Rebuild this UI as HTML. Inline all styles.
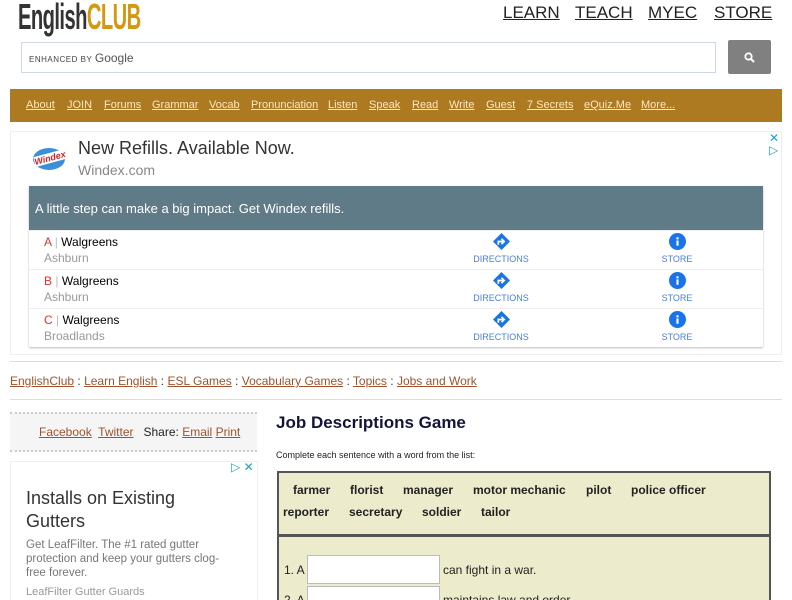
<!DOCTYPE html>
<html style="overflow:hidden"><head><meta charset="utf-8"><style>
html,body{margin:0;width:792px;height:600px;overflow:hidden}
body{background:#fff;font-family:"Liberation Sans",Arial,sans-serif;position:relative}
.a{position:absolute}
a{color:inherit;text-decoration:underline}
.top a{color:#222;font-size:17px;position:absolute;top:3px}
.nav{left:10px;top:89px;width:772px;height:33px;background:#ad7a22}
.nav a{color:#fbe8c0;font-size:11px;position:absolute;top:10px}
.bc a{color:#a0522d}
.rf{font-family:"Liberation Sans",sans-serif}
.row{position:absolute;left:0;width:734px;height:38px;border-top:1px solid #eee;font-size:12px}
.dir{position:absolute;left:440px;top:1px;width:64px;text-align:center;color:#4a80d8;font-size:9px;line-height:11px}
.st{position:absolute;left:628px;top:1px;width:40px;text-align:center;color:#4a80d8;font-size:9px;line-height:11px}
.ico{display:inline-block;width:17px;height:17px;margin-top:1px;margin-bottom:1px}
.w{font-weight:bold;font-size:12px;position:absolute;color:#222}
</style></head><body>
<div class="a" style="left:18px;top:-4px;font-size:36px;font-weight:bold;letter-spacing:-1px;transform:scaleX(0.56);transform-origin:left"><span style="color:#333">English</span><span style="color:#d4990e">CLUB</span></div>
<div class="top"><a style="left:503px">LEARN</a><a style="left:575px">TEACH</a><a style="left:648px">MYEC</a><a style="left:714px">STORE</a></div>
<div class="a" style="left:21px;top:42px;width:693px;height:29px;border:1px solid #cfd8e0;background:#fff"><span class="a" style="left:7px;top:8px;font-size:8px;color:#444;letter-spacing:.5px">ENHANCED BY <span style="font-size:12px;letter-spacing:0;color:#555">Google</span></span></div>
<div class="a" style="left:728px;top:40px;width:43px;height:34px;background:#808080;border-radius:2px"><svg class="a" style="left:16px;top:12px" width="11" height="11"><circle cx="4.5" cy="4.5" r="3.2" stroke="#fff" stroke-width="1.8" fill="none"/><path d="M7 7l3 3" stroke="#fff" stroke-width="2"/></svg></div>
<div class="a nav"><a style="left:16px">About</a><a style="left:57px">JOIN</a><a style="left:94px">Forums</a><a style="left:142px">Grammar</a><a style="left:199px">Vocab</a><a style="left:241px">Pronunciation</a><a style="left:318px">Listen</a><a style="left:359px">Speak</a><a style="left:402px">Read</a><a style="left:439px">Write</a><a style="left:476px">Guest</a><a style="left:517px">7 Secrets</a><a style="left:574px">eQuiz.Me</a><a style="left:631px">More...</a></div>
<div class="a" style="left:10px;top:131px;width:770px;height:222px;border:1px solid #eee"></div>
<div class="a" style="left:33px;top:148px;width:32px;height:22px;border-radius:50%;background:#3a8fd8"><span class="a" style="left:1px;top:5px;font-size:9px;color:#e02020;font-style:italic;font-weight:bold;background:#fff;transform:rotate(-15deg)">Windex</span></div>
<div class="a rf" style="left:78px;top:138px;font-size:18px;color:#333">New Refills. Available Now.</div>
<div class="a rf" style="left:78px;top:162px;font-size:14px;color:#888">Windex.com</div>
<div class="a" style="left:769px;top:132px;color:#1fa3c4;font-size:12px;line-height:12px">✕<br>▷</div>
<div class="a" style="left:29px;top:186px;width:734px;height:161px;box-shadow:0 1px 2px #bbb">
<div class="a rf" style="left:0;top:0;width:734px;height:44px;background:#607b88;color:#fff;font-size:13px"><span class="a" style="left:6px;top:15px">A little step can make a big impact. Get Windex refills.</span></div>
<div class="row" style="top:44px"><span class="a rf" style="left:15px;top:4px"><span style="color:#d33">A</span> <span style="color:#bbb">|</span> Walgreens</span><span class="a rf" style="left:15px;top:20px;color:#999">Ashburn</span><span class="dir"><svg class="ico" viewBox="0 0 16 16"><path d="M8 0L16 8L8 16L0 8Z" fill="#1a73e8"/><path d="M5 11V8h5M8 5.5L10.5 8L8 10.5" stroke="#fff" stroke-width="1.6" fill="none"/></svg><br>DIRECTIONS</span><span class="st"><svg class="ico" viewBox="0 0 16 16"><circle cx="8" cy="8" r="8" fill="#1a73e8"/><rect x="7" y="7" width="2" height="5" fill="#fff"/><rect x="7" y="4" width="2" height="2" fill="#fff"/></svg><br>STORE</span></div>
<div class="row" style="top:83px"><span class="a rf" style="left:15px;top:4px"><span style="color:#d33">B</span> <span style="color:#bbb">|</span> Walgreens</span><span class="a rf" style="left:15px;top:20px;color:#999">Ashburn</span><span class="dir"><svg class="ico" viewBox="0 0 16 16"><path d="M8 0L16 8L8 16L0 8Z" fill="#1a73e8"/><path d="M5 11V8h5M8 5.5L10.5 8L8 10.5" stroke="#fff" stroke-width="1.6" fill="none"/></svg><br>DIRECTIONS</span><span class="st"><svg class="ico" viewBox="0 0 16 16"><circle cx="8" cy="8" r="8" fill="#1a73e8"/><rect x="7" y="7" width="2" height="5" fill="#fff"/><rect x="7" y="4" width="2" height="2" fill="#fff"/></svg><br>STORE</span></div>
<div class="row" style="top:122px"><span class="a rf" style="left:15px;top:4px"><span style="color:#d33">C</span> <span style="color:#bbb">|</span> Walgreens</span><span class="a rf" style="left:15px;top:20px;color:#999">Broadlands</span><span class="dir"><svg class="ico" viewBox="0 0 16 16"><path d="M8 0L16 8L8 16L0 8Z" fill="#1a73e8"/><path d="M5 11V8h5M8 5.5L10.5 8L8 10.5" stroke="#fff" stroke-width="1.6" fill="none"/></svg><br>DIRECTIONS</span><span class="st"><svg class="ico" viewBox="0 0 16 16"><circle cx="8" cy="8" r="8" fill="#1a73e8"/><rect x="7" y="7" width="2" height="5" fill="#fff"/><rect x="7" y="4" width="2" height="2" fill="#fff"/></svg><br>STORE</span></div>
</div>
<div class="a" style="left:10px;top:361px;width:772px;border-top:1px solid #ddd"></div>
<div class="a bc" style="left:10px;top:374px;font-size:12px;color:#333"><a>EnglishClub</a> : <a>Learn English</a> : <a>ESL Games</a> : <a>Vocabulary Games</a> : <a>Topics</a> : <a>Jobs and Work</a></div>
<div class="a" style="left:10px;top:399px;width:772px;border-top:1px solid #ddd"></div>
<div class="a" style="left:10px;top:412px;width:247px;height:36px;background:#f5f5f5;border-top:2px dotted #ccc;border-bottom:2px dotted #ccc;font-size:12px;color:#222"><span class="a bc" style="left:29px;top:11px"><a>Facebook</a>&nbsp; <a>Twitter</a> &nbsp; Share: <a>Email</a> <a>Print</a></span></div>
<div class="a" style="left:10px;top:461px;width:246px;height:145px;border:1px solid #eee"></div>
<div class="a" style="left:231px;top:460px;color:#1fa3c4;font-size:12px">▷ ✕</div>
<div class="a rf" style="left:26px;top:487px;font-size:18px;line-height:23px;color:#333">Installs on Existing<br>Gutters</div>
<div class="a rf" style="left:26px;top:538px;font-size:11.5px;line-height:14px;color:#777">Get LeafFilter. The #1 rated gutter<br>protection and keep your gutters clog-<br>free forever.</div>
<div class="a rf" style="left:26px;top:586px;font-size:11px;color:#999">LeafFilter Gutter Guards</div>
<div class="a" style="left:276px;top:413px;font-size:17px;font-weight:bold;color:#14143a">Job Descriptions Game</div>
<div class="a" style="left:276px;top:450px;font-size:9px;color:#222">Complete each sentence with a word from the list:</div>
<div class="a" style="left:277px;top:471px;width:490px;height:61px;background:#ecebcc;border:2px solid #555">
<span class="w" style="left:14px;top:10px">farmer</span><span class="w" style="left:71px;top:10px">florist</span><span class="w" style="left:124px;top:10px">manager</span><span class="w" style="left:194px;top:10px">motor mechanic</span><span class="w" style="left:307px;top:10px">pilot</span><span class="w" style="left:352px;top:10px">police officer</span>
<span class="w" style="left:4px;top:32px">reporter</span><span class="w" style="left:70px;top:32px">secretary</span><span class="w" style="left:143px;top:32px">soldier</span><span class="w" style="left:202px;top:32px">tailor</span></div>
<div class="a" style="left:277px;top:535px;width:490px;height:80px;background:#ecebcc;border:2px solid #555"></div>
<div class="a" style="left:284px;top:563px;font-size:12px;color:#222">1. A</div>
<div class="a" style="left:307px;top:555px;width:131px;height:27px;background:#fff;border:1px solid #bbb"></div>
<div class="a" style="left:443px;top:563px;font-size:12px;color:#222">can fight in a war.</div>
<div class="a" style="left:284px;top:593px;font-size:12px;color:#222">2. A</div>
<div class="a" style="left:307px;top:586px;width:131px;height:27px;background:#fff;border:1px solid #bbb"></div>
<div class="a" style="left:443px;top:593px;font-size:12px;color:#222">maintains law and order.</div>
</body></html>
